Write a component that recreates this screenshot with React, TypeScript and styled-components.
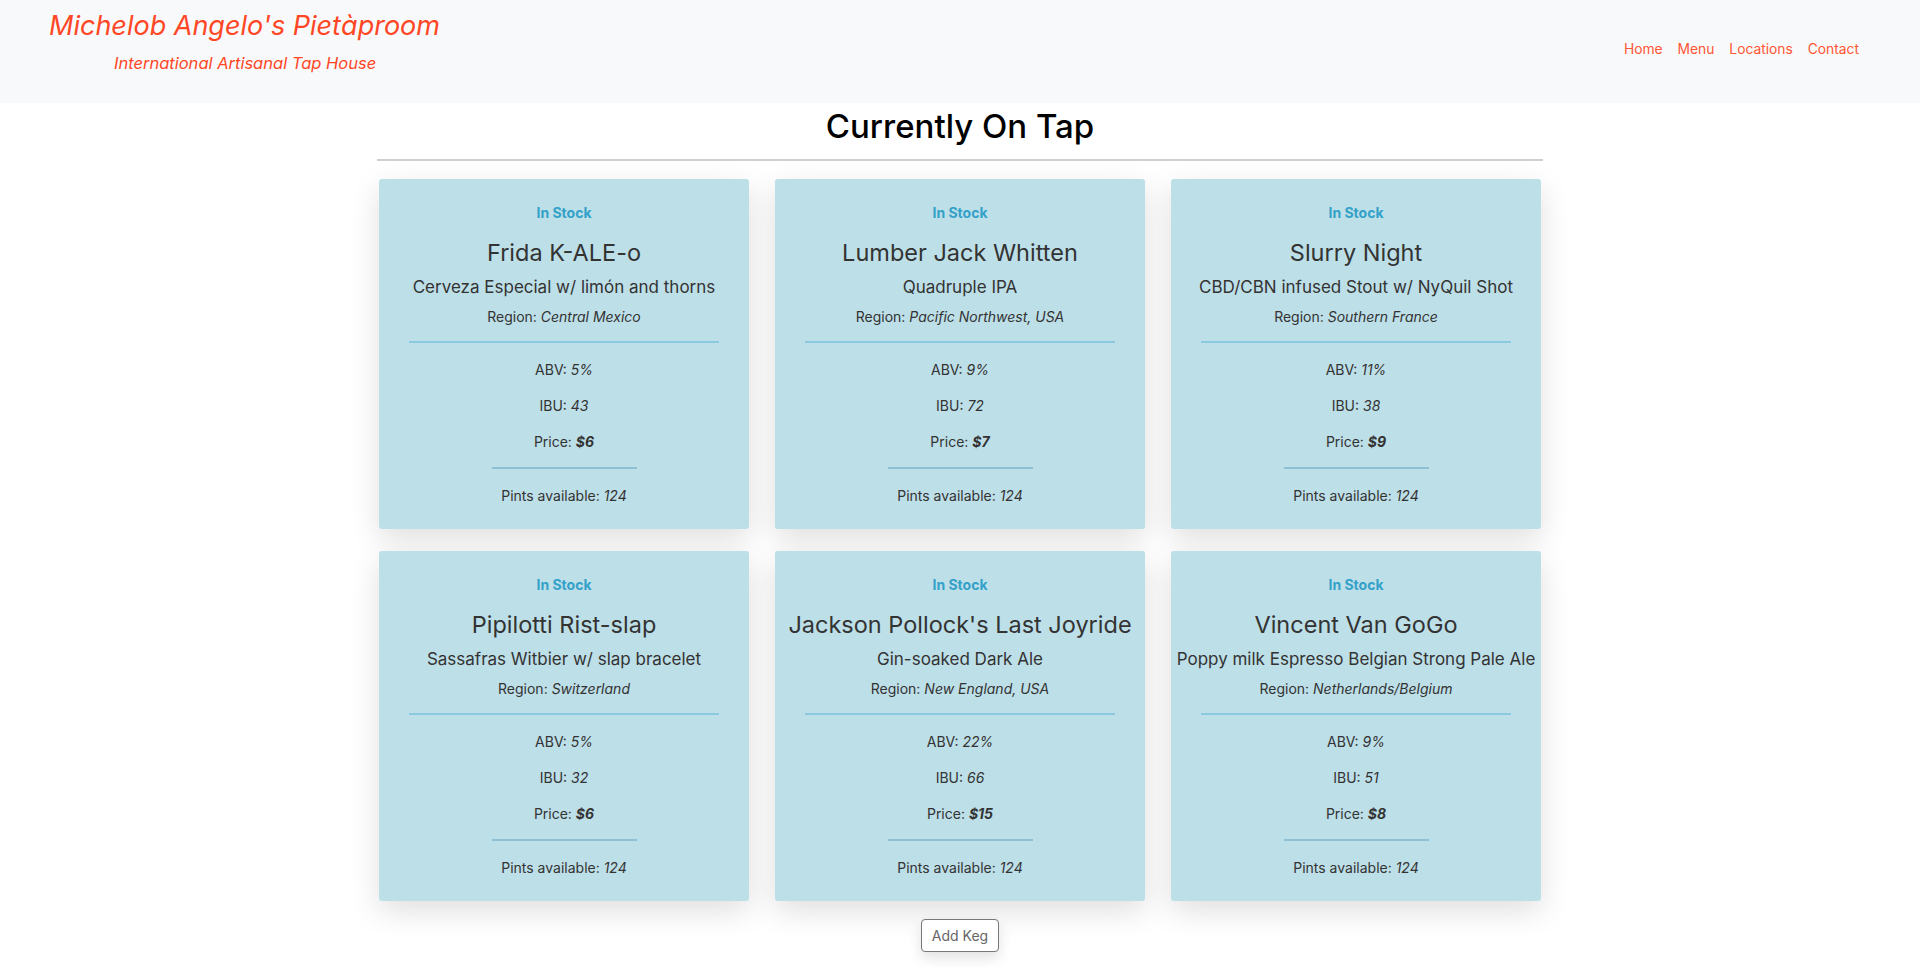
import React from "react";
import styled, { createGlobalStyle } from "styled-components";

const GlobalStyle = createGlobalStyle`
  html, body { margin: 0; padding: 0; background: #ffffff; }
  body { font-family: Inter, "Noto Sans", sans-serif; color: #333; }
  * { box-sizing: border-box; }
`;

const Header = styled.header`
  height: 103px;
  background: #f8f9fa;
  display: flex;
  justify-content: space-between;
  align-items: flex-start;
  padding: 0 61px 0 49px;
`;

const Brand = styled.div`
  display: flex;
  flex-direction: column;
  padding-top: 9px;
`;

const BrandTitle = styled.div`
  font-size: 27px;
  line-height: 34px;
  font-style: italic;
  color: #ff4726;
  white-space: nowrap;
`;

const BrandTagline = styled.div`
  font-size: 16.5px;
  line-height: 24px;
  font-style: italic;
  color: #ff4726;
  margin: 8px 0 0 65px;
  white-space: nowrap;
`;

const Nav = styled.nav`
  display: flex;
  gap: 15px;
  padding-top: 39px;
`;

const NavLink = styled.a`
  font-size: 13.8px;
  line-height: 20px;
  color: #ff5533;
  text-decoration: none;
`;

const Main = styled.main`
  width: 1166px;
  margin: 0 auto;
  display: flex;
  flex-direction: column;
  align-items: center;
`;

const PageTitle = styled.h1`
  margin: 3px 0 0;
  font-size: 33px;
  line-height: 40px;
  font-weight: 450;
  color: #000;
`;

const Rule = styled.hr`
  width: 100%;
  margin: 13px 0 0;
  border: 0;
  border-top: 2px solid #d0d0d0;
`;

const Grid = styled.div`
  margin-top: 18px;
  display: grid;
  grid-template-columns: repeat(3, 370px);
  column-gap: 26px;
  row-gap: 22px;
`;

const Card = styled.div`
  background: #bddfe8;
  border-radius: 3px;
  box-shadow: 0 10px 30px rgba(0, 0, 0, 0.13);
  padding: 24px 20px 23px;
  display: flex;
  flex-direction: column;
  align-items: center;
  text-align: center;
`;

const Stock = styled.div`
  font-size: 14px;
  line-height: 20px;
  font-weight: 700;
  color: #34a1c9;
`;

const BeerName = styled.div`
  margin-top: 15px;
  font-size: 23.5px;
  line-height: 30px;
  color: #333;
  white-space: nowrap;
`;

const Style = styled.div`
  margin-top: 7px;
  font-size: 17px;
  line-height: 24px;
  color: #333;
  white-space: nowrap;
`;

const Info = styled.div<{ $gap?: number }>`
  margin-top: ${(p) => p.$gap ?? 0}px;
  font-size: 14px;
  line-height: 20px;
  color: #333;
  white-space: nowrap;
  em { font-style: italic; }
  strong { font-style: italic; font-weight: 700; }
`;

const Divider = styled.div<{ $short?: boolean; $gap: number }>`
  margin-top: ${(p) => p.$gap}px;
  width: ${(p) => (p.$short ? "145px" : "310px")};
  height: 2px;
  background: ${(p) => (p.$short ? "#8fbfd3" : "#8cc9e0")};
`;

const Stats = styled.div`
  margin-top: 17px;
  display: flex;
  flex-direction: column;
  gap: 16px;
  align-items: center;
`;

const AddButton = styled.button`
  margin: 18px 0 16px;
  width: 78px;
  height: 33px;
  font-family: Inter, sans-serif;
  font-size: 14px;
  color: #666;
  background: #fff;
  border: 1px solid #777;
  border-radius: 4px;
  box-shadow: 0 6px 14px rgba(0, 0, 0, 0.12);
  cursor: pointer;
`;

type Keg = {
  name: string;
  style: string;
  region: string;
  abv: string;
  ibu: string;
  price: string;
};

const kegs: Keg[] = [
  { name: "Frida K-ALE-o", style: "Cerveza Especial w/ limón and thorns", region: "Central Mexico", abv: "5%", ibu: "43", price: "$6" },
  { name: "Lumber Jack Whitten", style: "Quadruple IPA", region: "Pacific Northwest, USA", abv: "9%", ibu: "72", price: "$7" },
  { name: "Slurry Night", style: "CBD/CBN infused Stout w/ NyQuil Shot", region: "Southern France", abv: "11%", ibu: "38", price: "$9" },
  { name: "Pipilotti Rist-slap", style: "Sassafras Witbier w/ slap bracelet", region: "Switzerland", abv: "5%", ibu: "32", price: "$6" },
  { name: "Jackson Pollock's Last Joyride", style: "Gin-soaked Dark Ale", region: "New England, USA", abv: "22%", ibu: "66", price: "$15" },
  { name: "Vincent Van GoGo", style: "Poppy milk Espresso Belgian Strong Pale Ale", region: "Netherlands/Belgium", abv: "9%", ibu: "51", price: "$8" },
];

export default function App() {
  return (
    <>
      <GlobalStyle />
      <Header>
        <Brand>
          <BrandTitle>Michelob Angelo's Pietàproom</BrandTitle>
          <BrandTagline>International Artisanal Tap House</BrandTagline>
        </Brand>
        <Nav>
          <NavLink href="#">Home</NavLink>
          <NavLink href="#">Menu</NavLink>
          <NavLink href="#">Locations</NavLink>
          <NavLink href="#">Contact</NavLink>
        </Nav>
      </Header>
      <Main>
        <PageTitle>Currently On Tap</PageTitle>
        <Rule />
        <Grid>
          {kegs.map((k) => (
            <Card key={k.name}>
              <Stock>In Stock</Stock>
              <BeerName>{k.name}</BeerName>
              <Style>{k.style}</Style>
              <Info $gap={8}>
                Region: <em>{k.region}</em>
              </Info>
              <Divider $gap={14} />
              <Stats>
                <Info>
                  ABV: <em>{k.abv}</em>
                </Info>
                <Info>
                  IBU: <em>{k.ibu}</em>
                </Info>
                <Info>
                  Price: <strong>{k.price}</strong>
                </Info>
              </Stats>
              <Divider $short $gap={15} />
              <Info $gap={17}>
                Pints available: <em>124</em>
              </Info>
            </Card>
          ))}
        </Grid>
        <AddButton>Add Keg</AddButton>
      </Main>
    </>
  );
}
